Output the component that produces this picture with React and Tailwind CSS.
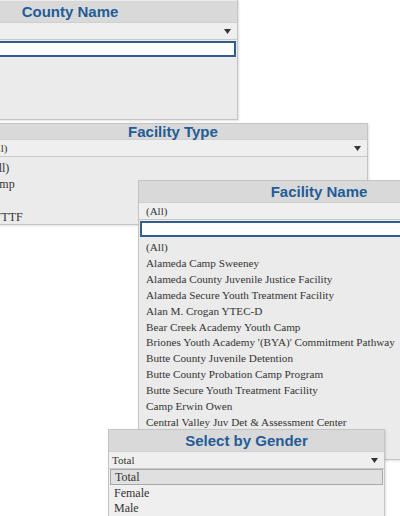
import React from "react";

const serif = { fontFamily: '"Liberation Serif", "Times New Roman", serif' };

function Arrow() {
  return (
    <svg width="7" height="5" viewBox="0 0 7 5" className="shrink-0">
      <path d="M0 0 H7 L3.5 5 Z" fill="#333" />
    </svg>
  );
}

function Header({ title }) {
  return (
    <div className="flex h-[22px] items-center justify-center bg-[#d9d9d9] border-b border-[#cfcfcf]">
      <span className="font-['Liberation_Sans',Arial,sans-serif] text-[15px] font-bold text-[#235c96] leading-none">
        {title}
      </span>
    </div>
  );
}

function Drop({ value, pl = "pl-[5px]" }) {
  return (
    <div
      className={`flex h-[17px] items-center justify-between ${pl} pr-[6px] bg-[#efefef] border-b border-[#c9c9c9] text-[11px] text-[#333]`}
      style={serif}
    >
      <span>{value}</span>
      <Arrow />
    </div>
  );
}

function SearchBox() {
  return <div className="mx-[1px] mt-[1px] h-[16px] bg-white border-2 border-[#2f5f8f]" />;
}

export default function App() {
  return (
    <div className="relative h-[516px] w-[400px] overflow-hidden bg-white">
      {/* County Name */}
      <div className="absolute left-[-98px] top-[-1px] w-[336px] h-[121px] flex flex-col bg-[#ebebeb] border border-[#c4c4c4] shadow-[1px_1px_2px_rgba(0,0,0,0.12)]">
        <div className="h-[1px]" />
        <Header title="County Name" />
        <Drop value="" />
        <SearchBox />
        <div className="flex-1" />
      </div>

      {/* Facility Type */}
      <div className="absolute left-[-22px] top-[123px] w-[390px] h-[102px] flex flex-col bg-[#ebebeb] border border-[#c4c4c4] shadow-[1px_1px_2px_rgba(0,0,0,0.12)]">
        <Header title="Facility Type" />
        <Drop value="(All)" pl="pl-[7px]" />
        <div className="flex flex-col pl-[7px] pt-[3px] text-[12px] leading-[16.3px] text-[#333]" style={serif}>
          <span>(All)</span>
          <span>Camp</span>
          <span>JH</span>
          <span>SYTTF</span>
        </div>
      </div>

      {/* Facility Name */}
      <div className="absolute left-[138px] top-[180px] w-[362px] h-[280px] flex flex-col bg-[#ebebeb] border border-[#c4c4c4] shadow-[1px_1px_2px_rgba(0,0,0,0.12)]">
        <Header title="Facility Name" />
        <Drop value="(All)" pl="pl-[7px]" />
        <SearchBox />
        <div className="flex flex-col pl-[7px] pt-[3px] text-[11.2px] leading-[15.9px] text-[#333]" style={serif}>
          <span>(All)</span>
          <span>Alameda Camp Sweeney</span>
          <span>Alameda County Juvenile Justice Facility</span>
          <span>Alameda Secure Youth Treatment Facility</span>
          <span>Alan M. Crogan YTEC-D</span>
          <span>Bear Creek Academy Youth Camp</span>
          <span>Briones Youth Academy '(BYA)' Commitment Pathway</span>
          <span>Butte County Juvenile Detention</span>
          <span>Butte County Probation Camp Program</span>
          <span>Butte Secure Youth Treatment Facility</span>
          <span>Camp Erwin Owen</span>
          <span>Central Valley Juv Det &amp; Assessment Center</span>
        </div>
      </div>

      {/* Select by Gender */}
      <div className="absolute left-[108px] top-[429px] w-[277px] h-[95px] flex flex-col bg-[#efefef] border border-[#c4c4c4] shadow-[1px_1px_2px_rgba(0,0,0,0.12)]">
        <Header title="Select by Gender" />
        <Drop value="Total" pl="pl-[3px]" />
        <div className="flex flex-col text-[12px] text-[#333]" style={serif}>
          <div className="mx-[1px] h-[16px] flex items-center pl-[4px] bg-[#e0e0e0] border border-[#a8a8a8]">Total</div>
          <div className="pl-[5px] leading-[15px] pt-[1px]">Female</div>
          <div className="pl-[5px] leading-[15px]">Male</div>
        </div>
      </div>
    </div>
  );
}
